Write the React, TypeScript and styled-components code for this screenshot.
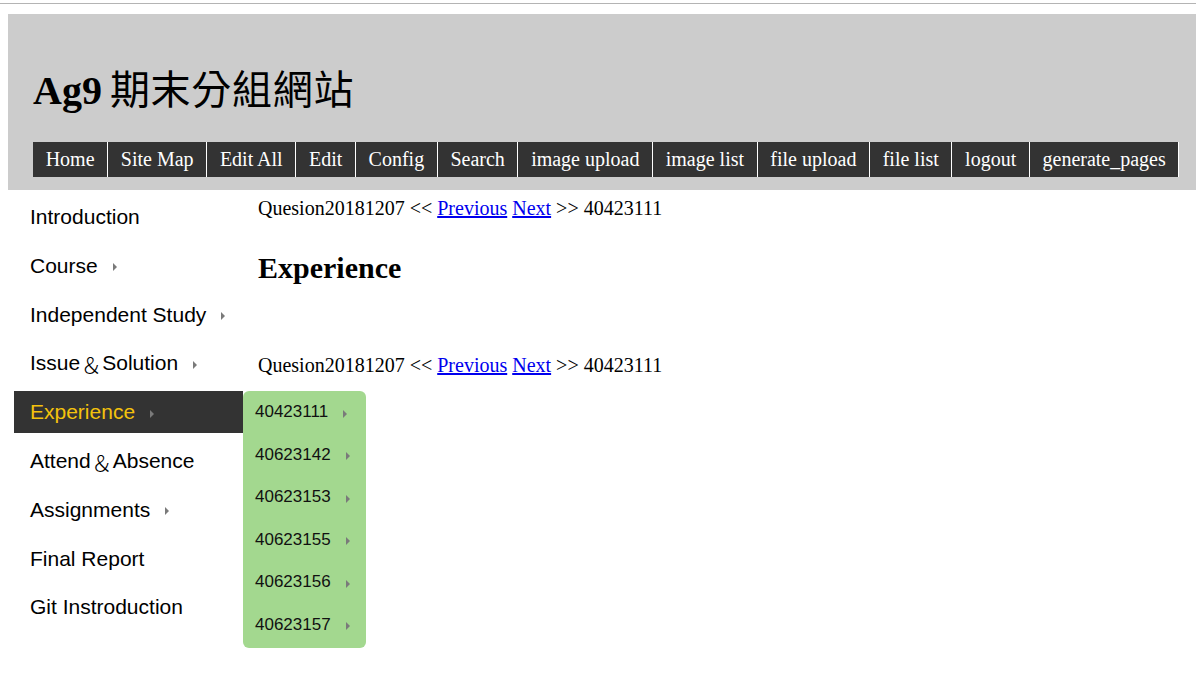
import React from "react";
import styled, { createGlobalStyle } from "styled-components";

const Global = createGlobalStyle`
  html, body { margin: 0; padding: 0; background: #fff; }
  body { font-family: "Liberation Serif", "Noto Sans CJK TC", serif; color: #000; overflow-x: hidden; }
`;

const TopRule = styled.div`
  height: 1px;
  margin-top: 3px;
  background: #b4b4b4;
`;

const Header = styled.header`
  margin: 10px 0 0 8px;
  background: #cccccc;
  padding: 49px 0 13px 25px;
`;

const Title = styled.h1`
  margin: 0 0 31px 0;
  font-family: "Liberation Serif", "Noto Sans CJK TC", serif;
  font-size: 40px;
  line-height: 48px;
  font-weight: bold;
  height: 48px;
  white-space: nowrap;
`;

const Cjk = styled.span`
  font-family: "Noto Sans CJK TC", sans-serif;
  font-weight: 400;
  font-size: 40px;
  letter-spacing: 0.7px;
  margin-left: -2px;
`;

const Nav = styled.nav`
  display: flex;
  height: 35px;
`;

const NavItem = styled.a`
  display: block;
  background: #333333;
  color: #ffffff;
  font-family: "Liberation Serif", serif;
  font-size: 20px;
  line-height: 35px;
  padding: 0 12.65px;
  border-right: 1px solid #ffffff;
  text-decoration: none;
  white-space: nowrap;
`;

const Main = styled.div`
  display: flex;
  align-items: flex-start;
  padding-bottom: 60px;
`;

const Sidebar = styled.ul`
  list-style: none;
  margin: 6px 0 0 14px;
  padding: 0;
  width: 229px;
  flex: none;
`;

const SideItem = styled.li<{ $active?: boolean }>`
  position: relative;
  height: 42px;
  margin-bottom: 6.8px;
  display: flex;
  align-items: center;
  padding-left: 16px;
  background: ${(p) => (p.$active ? "#333333" : "transparent")};
  color: ${(p) => (p.$active ? "#f4c20d" : "#000")};
  font-family: "Liberation Sans", "Noto Sans CJK TC", sans-serif;
  font-size: 21px;
  white-space: nowrap;
`;

const Amp = styled.span`
  font-family: "Noto Sans CJK TC", serif;
  font-size: 22px;
  font-weight: 300;
`;

const Arrow = styled.span<{ $gap?: number }>`
  display: inline-block;
  width: 0;
  height: 0;
  margin-left: ${(p) => p.$gap ?? 15}px;
  margin-top: 3px;
  border-left: 4.5px solid #7a7a7a;
  border-top: 4px solid transparent;
  border-bottom: 4px solid transparent;
`;

const Dropdown = styled.ul`
  position: absolute;
  left: 229px;
  top: 0;
  width: 123px;
  margin: 0;
  padding: 0 0 2px 0;
  list-style: none;
  background: #a3d88f;
  border-radius: 6px;
  z-index: 2;
`;

const DropItem = styled.li`
  height: 42.5px;
  display: flex;
  align-items: center;
  padding-left: 12px;
  font-family: "Liberation Sans", sans-serif;
  font-size: 17px;
  color: #111;
`;

const Content = styled.div`
  margin: 7px 0 0 15px;
  font-family: "Liberation Serif", serif;
  font-size: 20px;
`;

const NavLine = styled.div<{ $top?: number }>`
  line-height: 23px;
  margin-top: ${(p) => p.$top ?? 0}px;
  white-space: nowrap;
  a { color: #0000ee; text-decoration: underline; }
`;

const Heading = styled.h2`
  margin: 31px 0 0 0;
  font-size: 30px;
  line-height: 34px;
  font-weight: bold;
`;

const navItems = [
  "Home", "Site Map", "Edit All", "Edit", "Config", "Search",
  "image upload", "image list", "file upload", "file list", "logout", "generate_pages",
];

const subItems = ["40423111", "40623142", "40623153", "40623155", "40623156", "40623157"];

const PageNav = ({ top }: { top?: number }) => (
  <NavLine $top={top}>
    Quesion20181207 &lt;&lt; <a href="#">Previous</a> <a href="#">Next</a> &gt;&gt; 40423111
  </NavLine>
);

export default function App() {
  return (
    <>
      <Global />
      <TopRule />
      <Header>
        <Title>
          Ag9 <Cjk>期末分組網站</Cjk>
        </Title>
        <Nav>
          {navItems.map((n) => (
            <NavItem key={n} href="#">{n}</NavItem>
          ))}
        </Nav>
      </Header>
      <Main>
        <Sidebar>
          <SideItem>Introduction</SideItem>
          <SideItem>Course<Arrow /></SideItem>
          <SideItem>Independent Study<Arrow /></SideItem>
          <SideItem>Issue<Amp>＆</Amp>Solution<Arrow /></SideItem>
          <SideItem $active>
            Experience<Arrow />
            <Dropdown>
              {subItems.map((s) => (
                <DropItem key={s}>{s}<Arrow $gap={15} /></DropItem>
              ))}
            </Dropdown>
          </SideItem>
          <SideItem>Attend<Amp>＆</Amp>Absence</SideItem>
          <SideItem>Assignments<Arrow /></SideItem>
          <SideItem>Final Report</SideItem>
          <SideItem>Git Instroduction</SideItem>
        </Sidebar>
        <Content>
          <PageNav />
          <Heading>Experience</Heading>
          <PageNav top={69} />
        </Content>
      </Main>
    </>
  );
}
